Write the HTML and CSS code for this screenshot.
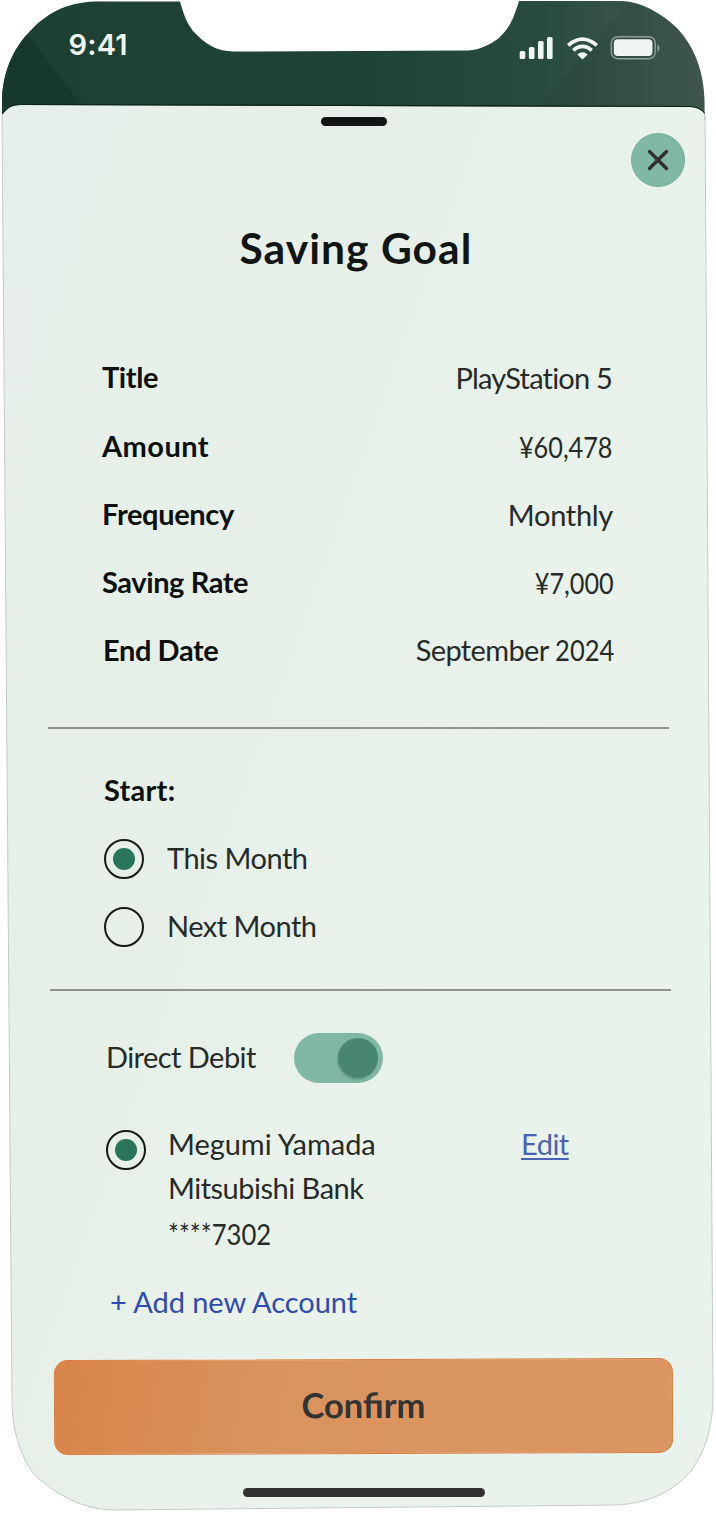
FILE: index.html
```
<!DOCTYPE html>
<html lang="en">
<head>
<meta charset="utf-8">
<title>Saving Goal</title>
<link rel="stylesheet" href="styles.css">
</head>
<body>
<main class="phone">
  <svg class="shell" width="716" height="1515" viewBox="0 0 716 1515" aria-hidden="true">
    <defs>
      <linearGradient id="header" x1="0" y1="0" x2="1" y2="0">
        <stop offset="0" stop-color="#1d4033"/><stop offset=".5" stop-color="#1f4336"/><stop offset=".75" stop-color="#294a3f"/><stop offset="1" stop-color="#445d53"/>
      </linearGradient>
      <linearGradient id="sheet" gradientUnits="userSpaceOnUse" x1="0" y1="300" x2="620" y2="520">
        <stop offset="0" stop-color="#e6efe9"/><stop offset=".55" stop-color="#e6f0e8"/><stop offset="1" stop-color="#e9f3eb"/>
      </linearGradient>
      <clipPath id="outline">
        <path d="M2 112V98C4 62 20 40 36 25C54 9 72 1.500 100 1.500H180C184 16 187 23 193 31C204 43 216 51.500 233 51.500L468 50.500C480 50 491 44 499 38C510 28 514 17 519 1H622C642 2 661 13 677 28C695 47 704 73 704.500 100L713 1395C713 1428 705 1452 690 1472C672 1493 645 1504 615 1505L112 1510C83 1509 56 1495 34 1474C20 1456 12 1430 12 1400Z"/>
      </clipPath>
    </defs>
    <g clip-path="url(#outline)">
      <rect width="716" height="120" fill="url(#header)"/>
      <path d="M27 35L83 106H0V35Z" fill="#17392d"/>
      <path d="M632 0L537 108H716V0Z" fill="#000" opacity=".05"/>
      <path d="M2 115C6 109 11 105 20 105L690 107C697 107 702 110 705 114L716 1515H0Z" fill="url(#sheet)"/>
      <path d="M2 114C6 108 11 104.500 20 104.500L690 106.500C697 106.500 702 109.500 705 113.500" fill="none" stroke="#0b241a" stroke-width="1.200"/>
    </g>
    <path d="M2 115L12 1400C12 1430 20 1456 34 1474C56 1495 83 1509 112 1510L615 1505C645 1504 672 1493 690 1472C705 1452 713 1428 713 1395L705 115" fill="none" stroke="#c3cbc6"/>
  </svg>

  <header class="status">
    <span class="time">9:41</span>
    <svg class="indicators" width="142" height="26" viewBox="518 35 142 26" aria-label="Signal, Wi-Fi, battery">
      <g fill="#f0f5f1">
        <rect x="519.700" y="51" width="5.600" height="8" rx="1.600"/><rect x="528.900" y="47" width="5.600" height="12" rx="1.600"/>
        <rect x="538" y="41" width="5.600" height="18" rx="1.600"/><rect x="547" y="37" width="5.600" height="22" rx="1.600"/>
        <path d="M582.500 59.500L577.300 54.400Q582.500 50.300 587.700 54.400Z"/>
        <rect x="613.800" y="39.300" width="38.600" height="16.800" rx="4"/>
      </g>
      <g fill="none" stroke="#f0f5f1" stroke-width="3.700">
        <path d="M568.200 45.300Q582.500 33.100 596.800 45.300"/><path d="M573.200 50.300Q582.500 42.600 591.800 50.300"/>
      </g>
      <rect x="611.300" y="36.700" width="44" height="22" rx="6.500" fill="none" stroke="#8fa097" stroke-width="1.400"/>
      <path d="M657.400 44.500C660.200 45.500 660.200 50.500 657.400 51.500Z" fill="#8fa097"/>
    </svg>
  </header>

  <section class="sheet">
    <div class="topbar">
      <span class="grabber"></span>
      <button class="close" aria-label="Close"><svg width="22" height="22" viewBox="0 0 22 22"><path d="M2.500 2.500L19.500 19.500M19.500 2.500L2.500 19.500" stroke="#303030" stroke-width="3.400" stroke-linecap="round"/></svg></button>
    </div>
    <h1 class="title"><span>Saving Goal</span></h1>
    <dl class="details">
      <div class="row"><dt class="k1">Title</dt><dd class="v1">PlayStation 5</dd></div>
      <div class="row"><dt class="k2">Amount</dt><dd class="v2">¥60,478</dd></div>
      <div class="row"><dt class="k3">Frequency</dt><dd class="v3">Monthly</dd></div>
      <div class="row"><dt class="k4">Saving Rate</dt><dd class="v4">¥7,000</dd></div>
      <div class="row"><dt class="k5">End Date</dt><dd class="v5">September <span class="year">2024</span></dd></div>
    </dl>
    <hr class="rule">
    <div class="start">
      <h2 class="start-title">Start:</h2>
      <div class="option"><span class="radio on"></span><span class="label">This Month</span></div>
      <div class="option next"><span class="radio"></span><span class="label">Next Month</span></div>
    </div>
    <hr class="rule second">
    <div class="debit"><span class="debit-label">Direct Debit</span><span class="toggle"><span class="knob"></span></span></div>
    <div class="account">
      <span class="radio on"></span>
      <div class="lines"><span class="holder">Megumi Yamada</span><span class="bank">Mitsubishi Bank</span><span class="number">****7302</span></div>
      <a class="edit">Edit</a>
    </div>
    <a class="add">+ Add new Account</a>
    <button class="confirm"><span>Confirm</span></button>
    <span class="home"></span>
  </section>
</main>
</body>
</html>
```
FILE: styles.css
```
* { box-sizing: border-box; }
body { margin: 0; background: #fff; }
.phone {
  position: relative;
  width: 716px;
  height: 1515px;
  overflow: hidden;
  font-family: Lato, sans-serif;
  font-size: 29px;
  line-height: 40px;
  color: #262a28;
}
.shell { position: absolute; inset: 0; }
.status, .sheet { position: relative; }
.status {
  height: 105px;
  padding: 25px 56px 0 68.5px;
  display: flex;
  justify-content: space-between;
}
.time { font: 600 29px/40px Inter, sans-serif; letter-spacing: .2px; color: #f0f5f1; }
.indicators { margin-top: 10px; }
.sheet { height: 1410px; display: flex; flex-direction: column; }
.topbar { height: 82px; padding: 12px 31px 0 0; display: grid; grid-template-columns: 321px 66px 1fr; }
.grabber { grid-column: 2; height: 9px; border-radius: 5px; background: #131614; }
.close {
  justify-self: end;
  width: 54px;
  height: 54px;
  margin-top: 16px;
  padding: 0;
  border: 1px solid #73af9b;
  border-radius: 50%;
  background: #80b7a5;
  display: grid;
  place-items: center;
}
.title { margin: 31px 0 0; padding-left: 239.5px; font-size: 42.5px; line-height: 60px; height: 60px; letter-spacing: 1.05px; color: #111513; white-space: nowrap; }
.details { margin: 79.4px 102px 0; height: 341px; }
.row { height: 68.2px; display: flex; justify-content: space-between; }
.row dt { font-weight: 700; color: #0d100e; }
.row dd { margin: 1px 0 0; }
.k1 { letter-spacing: -.4px; }
.k2 { letter-spacing: .45px; }
.k3 { letter-spacing: -.35px; }
.k4 { letter-spacing: -.4px; }
.k5 { padding-left: 1px; letter-spacing: -.4px; }
.row .v1 { margin-right: 2px; letter-spacing: -.8px; }
.row .v2 { margin-right: 1px; transform: scaleX(.87); transform-origin: right; }
.row .v3 { margin-right: 1px; letter-spacing: -.3px; }
.row .v4 { margin-right: 0; transform: scaleX(.87); transform-origin: right; }
.row .v5 { margin: 0; letter-spacing: -.65px; }
.year { display: inline-block; margin-left: -8px; letter-spacing: 0; transform: scaleX(.88); transform-origin: right; }
.rule { width: 621px; height: 2px; margin: 28.6px 0 0 48px; border: 0; background: #929292; flex: none; }
.start { height: 260px; padding: 41px 0 0 104px; }
.start-title { margin: 0 0 29px; font-size: 29px; line-height: 40px; letter-spacing: .25px; color: #0d100e; }
.option { display: flex; gap: 23px; height: 40px; }
.option.next { margin-top: 28px; }
.label { margin-top: -1px; letter-spacing: -.5px; }
.radio { flex: none; width: 40px; height: 40px; border: 2px solid #171918; border-radius: 50%; display: grid; place-items: center; }
.radio.on::before { content: ""; width: 22px; height: 22px; border-radius: 50%; background: #29745a; }
.rule.second { margin: 0 0 0 50px; }
.debit { height: 92px; padding: 42px 0 0 106px; display: flex; }
.debit-label { width: 188px; margin-top: 4px; letter-spacing: -.55px; }
.toggle { width: 89px; height: 50px; padding: 5px; border-radius: 25px; background: #80b7a5; display: flex; justify-content: flex-end; }
.knob { width: 40px; height: 40px; border-radius: 50%; background: #498670; box-shadow: -1px 2px 2px #69a18e; }
.account { height: 157px; margin-top: 43px; padding-left: 106px; display: grid; grid-template-columns: 62px 353px auto; justify-content: start; }
.account .radio { margin-top: 4px; }
.lines { display: flex; flex-direction: column; line-height: 44.5px; margin-top: -4px; }
.holder { letter-spacing: -.05px; }
.bank { letter-spacing: -.5px; }
.number { align-self: flex-start; margin-top: 1px; transform: scaleX(.885); transform-origin: left; }
.edit { margin-top: -2px; color: #4a62b8; letter-spacing: -.5px; text-decoration: underline; text-decoration-thickness: 2px; text-underline-offset: 3px; }
.add { margin-top: -1px; padding-left: 110px; color: #304bb0; height: 77px; letter-spacing: -.05px; }
.confirm {
  width: 619px;
  height: 95px;
  margin: 0 0 0 53.5px;
  padding: 0 0 3px;
  border: 1px solid #da7d3e;
  border-radius: 14px;
  background: linear-gradient(100deg, #d78449, #da935e 35%, #dc9663);
  font: 700 34.5px/40px Lato, sans-serif;
  color: #333432;
  transform: rotate(-.2deg);
}
.home { width: 242px; height: 9px; margin: 34px 0 0 243px; border-radius: 5px; background: #303130; }
```
